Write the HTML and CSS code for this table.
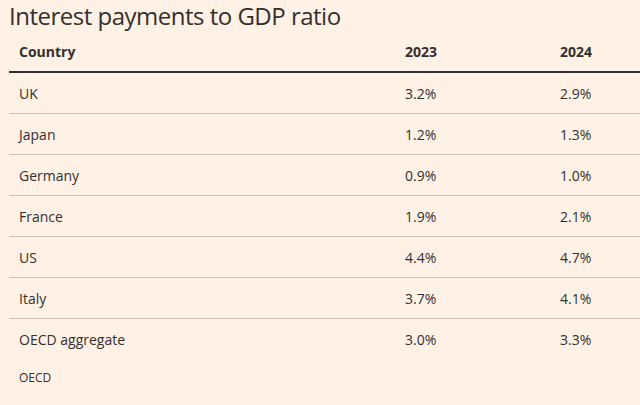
FILE: index.html
```html
<!DOCTYPE html>
<html>
<head>
<meta charset="utf-8">
<link rel="stylesheet" href="styles.css">
</head>
<body>
<div class="wrap">
  <h1 class="title">Interest payments to GDP ratio</h1>
  <table class="data">
    <colgroup><col class="c-country"><col class="c-a"><col class="c-b"></colgroup>
    <thead>
      <tr><th>Country</th><th>2023</th><th>2024</th></tr>
    </thead>
    <tbody>
      <tr><td>UK</td><td>3.2%</td><td>2.9%</td></tr>
      <tr><td>Japan</td><td>1.2%</td><td>1.3%</td></tr>
      <tr><td>Germany</td><td>0.9%</td><td>1.0%</td></tr>
      <tr><td>France</td><td>1.9%</td><td>2.1%</td></tr>
      <tr><td>US</td><td>4.4%</td><td>4.7%</td></tr>
      <tr><td>Italy</td><td>3.7%</td><td>4.1%</td></tr>
      <tr><td>OECD aggregate</td><td>3.0%</td><td>3.3%</td></tr>
    </tbody>
  </table>
  <div class="source">OECD</div>
</div>
</body>
</html>
```
FILE: styles.css
```css
html, body {
  margin: 0;
  padding: 0;
  background: #fff1e5;
  color: #33302e;
  font-family: "Open Sans", "Liberation Sans", sans-serif;
  overflow: hidden;
}
.wrap {
  padding-left: 9px;
  width: 640px;
}
.title {
  margin: 0;
  font-weight: 400;
  font-size: 24px;
  line-height: 32px;
  letter-spacing: -0.5px;
}
.data {
  width: 640px;
  table-layout: fixed;
  border-collapse: collapse;
  margin-top: 2px;
}
.data th {
  text-align: left;
  font-weight: 700;
  font-size: 14px;
  height: 35px;
  padding: 0 0 2px 10px;
  border-bottom: 2px solid #33302e;
}
.data td {
  font-size: 14px;
  height: 40px;
  padding: 0 0 0 10px;
  border-bottom: 1px solid #ccc1b7;
}
.data tbody tr:last-child td {
  border-bottom: none;
}
.c-country { width: 386px; }
.c-a { width: 155px; }
.c-b { width: 99px; }
.source {
  font-size: 12px;
  padding-left: 10px;
  margin-top: 10px;
}
```
